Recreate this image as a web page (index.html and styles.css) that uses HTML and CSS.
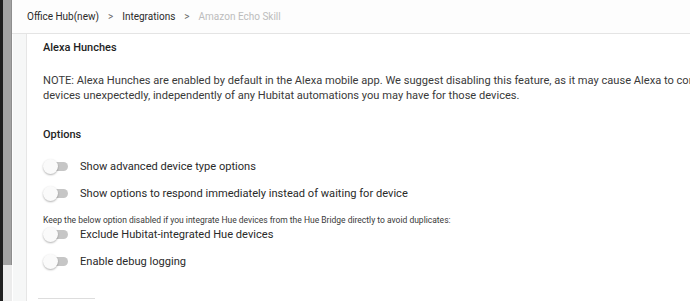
FILE: index.html
```html
<!DOCTYPE html>
<html>
<head>
<meta charset="utf-8">
<link rel="stylesheet" href="styles.css">
</head>
<body>
<div class="frame">
  <div class="edge"></div>
  <div class="scroll"><div class="thumb"></div></div>
  <div class="main">
    <header class="crumbs">
      <span class="crumb">Office Hub(new)</span>
      <span class="sep">&gt;</span>
      <span class="crumb">Integrations</span>
      <span class="sep">&gt;</span>
      <span class="crumb current">Amazon Echo Skill</span>
    </header>
    <div class="body">
      <div class="gutter"></div>
      <div class="content">
        <h3 class="title">Alexa Hunches</h3>
        <p class="note">NOTE: Alexa Hunches are enabled by default in the Alexa mobile app. We suggest disabling this feature, as it may cause Alexa to control devices unexpectedly, independently of any Hubitat automations you may have for those devices.</p>
        <h3 class="title options">Options</h3>
        <div class="opt first"><span class="toggle"><span class="knob"></span></span><span>Show advanced device type options</span></div>
        <div class="opt"><span class="toggle"><span class="knob"></span></span><span>Show options to respond immediately instead of waiting for device</span></div>
        <div class="hint">Keep the below option disabled if you integrate Hue devices from the Hue Bridge directly to avoid duplicates:</div>
        <div class="opt tight"><span class="toggle"><span class="knob"></span></span><span>Exclude Hubitat-integrated Hue devices</span></div>
        <div class="opt"><span class="toggle"><span class="knob"></span></span><span>Enable debug logging</span></div>
        <div class="btn"></div>
      </div>
    </div>
  </div>
</div>
</body>
</html>
```
FILE: styles.css
```css
html, body {
  margin: 0;
  padding: 0;
  height: 100%;
  overflow: hidden;
  background: #fff;
  font-family: Roboto, "Noto Sans", sans-serif;
  color: #333;
}
.frame {
  display: flex;
  height: 301px;
}
.edge {
  width: 3px;
  background: #1e1e1e;
  flex: none;
}
.scroll {
  width: 9px;
  flex: none;
  background: #ececec;
  display: flex;
  flex-direction: column;
}
.thumb {
  height: 265px;
  background: #a3a3a3;
  border-right: 1px solid #8e8e8e;
}
.main {
  flex: 1;
  display: flex;
  flex-direction: column;
  min-width: 0;
}
.crumbs {
  height: 33px;
  flex: none;
  display: flex;
  align-items: center;
  padding-left: 15px;
  font-size: 10px;
  color: #2a2a2a;
  border-bottom: 1px solid #e4e4e4;
  background: #fdfdfd;
}
.sep {
  margin: 0 9px;
  color: #666;
}
.current { color: #bcbcbc; }
.body {
  flex: 1;
  display: flex;
}
.gutter {
  width: 13px;
  flex: none;
  margin-left: 1px;
  background: #f6f7f7;
  border-right: 1px solid #e6e6e6;
}
.content {
  padding-left: 16px;
  width: 720px;
  flex: none;
}
.title {
  margin: 6px 0 0;
  font-size: 11px;
  font-weight: 500;
  color: #1e1e1e;
  line-height: 16px;
}
.note {
  margin: 17px 0 0;
  font-size: 11.1px;
  line-height: 15px;
  color: #3a3a3a;
  width: 695px;
}
.options { margin-top: 24px; }
.opt {
  display: flex;
  align-items: center;
  gap: 12px;
  height: 27px;
  font-size: 11.1px;
  color: #2a2a2a;
}
.first { margin-top: 10px; }
.hint {
  font-size: 8.5px;
  color: #3a3a3a;
  margin-top: 6.5px;
  line-height: 12px;
}
.tight {
  height: 17px;
  margin-bottom: 5px;
}
.toggle {
  position: relative;
  width: 25px;
  height: 15px;
  flex: none;
}
.toggle::before {
  content: "";
  position: absolute;
  left: 5px;
  right: 0;
  top: 3px;
  height: 9px;
  border-radius: 5px;
  background: #c6c6c6;
}
.knob {
  position: absolute;
  left: 0;
  top: 0;
  width: 15px;
  height: 15px;
  border-radius: 50%;
  background: #fafafa;
  box-shadow: 0 1px 2px rgba(0,0,0,0.3);
}
.btn {
  margin-top: 23px;
  margin-left: -5px;
  width: 57px;
  height: 10px;
  border-top: 1px solid #ddd;
}
```
